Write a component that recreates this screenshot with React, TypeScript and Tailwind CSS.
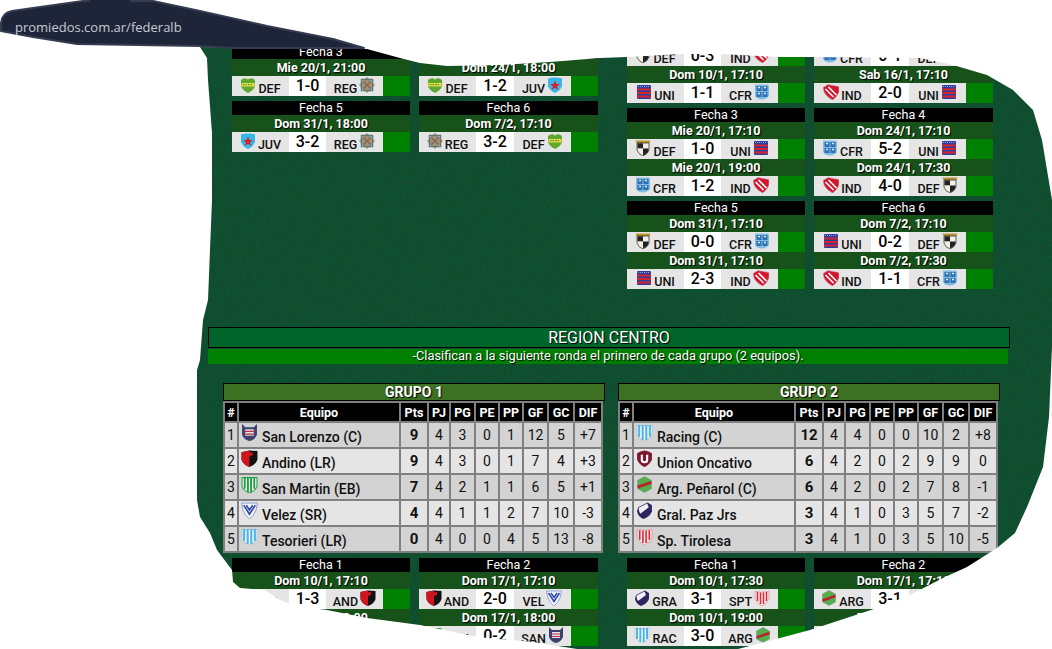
import React from "react";

type IconName = "dfl" | "reg" | "juv" | "dfp" | "ind" | "uni" | "cfr" | "sl" | "and" | "sma" | "vel" | "rac" | "uo" | "arg" | "gra" | "spt";

const shield = "M1 1.5H15V9.5Q14 13.5 8 16Q2 13.5 1 9.5Z";

const TeamIcon = ({ name, className }: { name: IconName; className: string }) => {
  const icons: Record<IconName, React.ReactNode> = {
    dfl: (
      <>
        <path d="M1 3Q4.5 0 8 2.5Q11.5 0 15 3V9Q14 13 8 16Q2 13 1 9Z" fill="#5fa82e" />
        <rect x="1.5" y="6" width="13" height="3.5" fill="#e6dd4a" />
        <path d="M3 7.7H13" stroke="#3d7a22" strokeWidth="1" strokeDasharray="1.5 1" />
      </>
    ),
    reg: (
      <>
        <path d="M8 0L16 8L8 16L0 8Z" fill="#8b9a8e" />
        <rect x="2.5" y="2.5" width="11" height="11" fill="none" stroke="#64786c" strokeWidth="1.5" />
        <path d="M8 3L13 8L8 13L3 8Z" fill="#d98434" />
        <path d="M4 4L12 12M12 4L4 12" stroke="#4f6f9c" strokeWidth="1.3" />
      </>
    ),
    juv: (
      <>
        <path d="M1 1.5Q8 -0.5 15 1.5V9Q13 14 8 16Q3 14 1 9Z" fill="#38b6e8" />
        <path d="M8 3.5L9.3 7H13L10 9.2L11.2 13L8 10.7L4.8 13L6 9.2L3 7H6.7Z" fill="#d81f2a" />
      </>
    ),
    dfp: (
      <>
        <path d="M0.5 0.5H15.5L14.5 3H1.5Z" fill="#b9962c" />
        <path d="M2 3H14V10Q13 14 8 16Q3 14 2 10Z" fill="#f1efe6" stroke="#222" strokeWidth="0.7" />
        <rect x="2.5" y="3.3" width="5.5" height="5" fill="#222" />
        <path d="M8 8.5H13.5V10.5Q12.5 13.5 8 15.5Z" fill="#222" />
      </>
    ),
    ind: (
      <>
        <path d="M0 3.5L5 0.5L16 2.5V8Q14.5 12.5 9.5 16Q3 12.5 1 8Z" fill="#d8142c" stroke="#b9b2b2" strokeWidth="0.6" />
        <path d="M2.5 5L10.5 13M5.5 3L13.5 11" stroke="#fff" strokeWidth="1.6" />
      </>
    ),
    uni: (
      <>
        <rect x="1" y="1" width="14" height="14" rx="1" fill="#2d3f9e" />
        <path d="M1 5.5H15M1 9H15M1 12.5H15" stroke="#d8232f" strokeWidth="2" />
        <path d="M2 2.5H14" stroke="#9aa4d8" strokeWidth="1" strokeDasharray="1 1" />
      </>
    ),
    cfr: (
      <>
        <path d="M1 0.5H14L15 2V12Q12 15.5 8 15.5Q3 15.5 1 12Z" fill="#7fbde3" />
        <rect x="2.5" y="2" width="5" height="5" fill="#2f72b4" />
        <rect x="8.5" y="2" width="5" height="5" fill="#2f72b4" />
        <rect x="2.5" y="8" width="5" height="5" fill="#2f72b4" />
        <rect x="8.5" y="8" width="5" height="5" fill="#2f72b4" />
        <path d="M4 3.5H6M10 3.5H12M4 9.5H6M10 9.5H12" stroke="#e6f2fa" strokeWidth="1.5" />
      </>
    ),
    sl: (
      <>
        <path d="M1 0L4 3H12L15 0V10Q13 15 8 16Q3 15 1 10Z" fill="#3f3f70" />
        <rect x="4" y="5" width="8" height="6" fill="#e8e2e6" />
        <path d="M4 7H12M4 9.5H12" stroke="#c2283f" strokeWidth="1.2" />
      </>
    ),
    and: (
      <>
        <path d="M0.5 2L8 0.5L15.5 1V9Q14 14 8 16Q2 14 0.5 9Z" fill="#111" />
        <path d="M0.5 2L8 0.5V16Q2 14 0.5 9Z" fill="#d0151f" />
        <path d="M7 2.5L11 2V5L8 6Z" fill="#d0151f" />
      </>
    ),
    sma: (
      <>
        <path d={shield} fill="#fff" stroke="#2ba24a" strokeWidth="1" />
        <path d="M3.5 1V12M6.5 1V15M9.5 1V15M12.5 1V12" stroke="#1f9d43" strokeWidth="1.8" />
      </>
    ),
    vel: (
      <>
        <path d="M0.5 1H15.5L14 8Q12 13 8 16Q4 13 2 8Z" fill="#f4f6fb" stroke="#7e8fd0" strokeWidth="0.8" />
        <path d="M2.5 3L8 11.5L13.5 3M5 3L8 7.5L11 3" fill="none" stroke="#2c49a8" strokeWidth="1.5" />
      </>
    ),
    rac: (
      <>
        <path d={shield} fill="#fff" stroke="#8fb4cc" strokeWidth="0.6" />
        <path d="M3 1V12M6.3 1V15M9.7 1V15M13 1V12" stroke="#4db4ea" strokeWidth="2" />
      </>
    ),
    uo: (
      <>
        <path d="M1 3Q4 1 8 0.5Q12 1 15 3V9Q13 14 8 16Q3 14 1 9Z" fill="#7c1a2c" />
        <path d="M5.5 4.5V9.5Q5.5 11.5 8 11.5Q10.5 11.5 10.5 9.5V4.5" fill="none" stroke="#fff" strokeWidth="2" />
      </>
    ),
    arg: (
      <>
        <path d="M8 0.5L14.5 4V12L8 15.5L1.5 12V4Z" fill="#53b04a" stroke="#7f8d7c" strokeWidth="0.5" />
        <path d="M1.5 10.5L14.5 6" stroke="#b8242f" strokeWidth="2.6" />
      </>
    ),
    gra: (
      <>
        <path d="M2 5L11 0.5L15 3V9Q13 14 7 16Q2 14 1 9Z" fill="#2c2560" />
        <path d="M2.5 5.5L10.5 1.5L12 5L4 11Q2.5 9 2.5 5.5Z" fill="#f1f1f5" />
      </>
    ),
    spt: (
      <>
        <path d="M1 1.5Q8 3 15 1.5V9Q13 14 8 16Q3 14 1 9Z" fill="#f8eaea" stroke="#d66" strokeWidth="0.5" />
        <path d="M3.5 2V11M6.5 2.5V14M9.5 2.5V14M12.5 2V11" stroke="#dc2a3c" strokeWidth="1.5" />
      </>
    ),
  };
  return (
    <svg viewBox="0 0 16 16" className={className}>
      {icons[name]}
    </svg>
  );
};

interface Match {
  date: string;
  home: string;
  homeIcon: IconName;
  score: string;
  away: string;
  awayIcon: IconName;
}

interface Fecha {
  title: string;
  matches: Match[];
}

const m = (date: string, home: string, homeIcon: IconName, score: string, away: string, awayIcon: IconName): Match => ({ date, home, homeIcon, score, away, awayIcon });

const shadow = "[text-shadow:1px_1px_1px_#000]";

const FechaCard = ({ title, matches }: Fecha) => (
  <div className="flex flex-col">
    <div className="h-[14px] bg-black text-center text-[12.5px] leading-[14px] text-white">{title}</div>
    {matches.map((x) => (
      <div key={x.date + x.home}>
        <div className={`h-[17px] bg-[#17521a] text-center text-[12.5px] font-bold leading-[17px] text-white ${shadow}`}>{x.date}</div>
        <div className="flex h-[20px]">
          <div className="flex w-[57px] items-start justify-center gap-[2px] bg-[#e5e5e5]">
            <TeamIcon name={x.homeIcon} className="mt-[1px] h-[16px] w-[16px] shrink-0" />
            <span className="mt-[5px] text-[12.5px] font-medium leading-[15px] text-[#111]">{x.home}</span>
          </div>
          <div className="flex-1 bg-white text-center text-[16px] font-medium leading-[19px] text-black">{x.score}</div>
          <div className="flex w-[57px] items-start justify-center gap-[2px] bg-[#e5e5e5]">
            <span className="mt-[5px] text-[12.5px] font-medium leading-[15px] text-[#111]">{x.away}</span>
            <TeamIcon name={x.awayIcon} className="mt-[1px] h-[16px] w-[16px] shrink-0" />
          </div>
          <div className="w-[27px] bg-[#008000]" />
        </div>
      </div>
    ))}
  </div>
);

const FechaGrid = ({ fechas, className }: { fechas: Fecha[]; className?: string }) => (
  <div className={`grid grid-cols-[178px_179px] gap-x-[9px] gap-y-[5px] pl-[9px] ${className ?? ""}`}>
    {fechas.map((f) => (
      <FechaCard key={f.title} {...f} />
    ))}
  </div>
);

type Row = [string, IconName, string, number, number, number, number, number, number, number, string];

const heads = ["#", "Equipo", "Pts", "PJ", "PG", "PE", "PP", "GF", "GC", "DIF"];

const GroupTable = ({ title, rows }: { title: string; rows: Row[] }) => (
  <div>
    <div className={`h-[18px] w-[382px] border border-black bg-[#3c7023] text-center text-[14px] font-bold leading-[17px] text-white ${shadow}`}>{title}</div>
    <table className="w-[380px] table-fixed border-separate border-spacing-[2px] bg-[#808080]">
      <colgroup>
        <col className="w-[12px]" />
        <col className="w-[160px]" />
        <col className="w-[26px]" />
        <col className="w-[20px]" />
        <col className="w-[23px]" />
        <col className="w-[22px]" />
        <col className="w-[22px]" />
        <col className="w-[23px]" />
        <col className="w-[24px]" />
        <col className="w-[26px]" />
      </colgroup>
      <thead>
        <tr className="h-[18px]">
          {heads.map((h) => (
            <th key={h} className={`bg-black p-0 text-center text-[12.5px] font-bold text-white ${shadow}`}>
              <div className="h-[18px] pt-[1px] leading-[18px]">{h}</div>
            </th>
          ))}
        </tr>
      </thead>
      <tbody>
        {rows.map((r, i) => (
          <tr key={r[0]} className={`h-[24px] text-[14px] leading-[24px] text-[#111] ${i % 2 === 0 ? "bg-[#d3d3d3]" : "bg-[#e5e5e5]"}`}>
            <td className="p-0 text-center">{i + 1}</td>
            <td className="p-0">
              <div className="flex h-[24px] items-start gap-[4px] pl-[2px]">
                <TeamIcon name={r[1]} className="mt-[1px] h-[17px] w-[17px] shrink-0" />
                <span className="mt-[2px] whitespace-nowrap font-medium">{r[2]}</span>
              </div>
            </td>
            <td className="p-0 text-center text-[15px] font-bold">{r[3]}</td>
            {r.slice(4).map((v, j) => (
              <td key={j} className="p-0 text-center">{v}</td>
            ))}
          </tr>
        ))}
      </tbody>
    </table>
  </div>
);

const topLeft: Fecha[] = [
  { title: "Fecha 3", matches: [m("Mie 20/1, 21:00", "DEF", "dfl", "1-0", "REG", "reg")] },
  { title: "Fecha 4", matches: [m("Dom 24/1, 18:00", "DEF", "dfl", "1-2", "JUV", "juv")] },
  { title: "Fecha 5", matches: [m("Dom 31/1, 18:00", "JUV", "juv", "3-2", "REG", "reg")] },
  { title: "Fecha 6", matches: [m("Dom 7/2, 17:10", "REG", "reg", "3-2", "DEF", "dfl")] },
];

const topRight: Fecha[] = [
  { title: "Fecha 1", matches: [m("Dom 10/1, 17:00", "DEF", "dfp", "0-3", "IND", "ind"), m("Dom 10/1, 17:10", "UNI", "uni", "1-1", "CFR", "cfr")] },
  { title: "Fecha 2", matches: [m("Sab 16/1, 17:00", "CFR", "cfr", "0-1", "DEF", "dfp"), m("Sab 16/1, 17:10", "IND", "ind", "2-0", "UNI", "uni")] },
  { title: "Fecha 3", matches: [m("Mie 20/1, 17:10", "DEF", "dfp", "1-0", "UNI", "uni"), m("Mie 20/1, 19:00", "CFR", "cfr", "1-2", "IND", "ind")] },
  { title: "Fecha 4", matches: [m("Dom 24/1, 17:10", "CFR", "cfr", "5-2", "UNI", "uni"), m("Dom 24/1, 17:30", "IND", "ind", "4-0", "DEF", "dfp")] },
  { title: "Fecha 5", matches: [m("Dom 31/1, 17:10", "DEF", "dfp", "0-0", "CFR", "cfr"), m("Dom 31/1, 17:10", "UNI", "uni", "2-3", "IND", "ind")] },
  { title: "Fecha 6", matches: [m("Dom 7/2, 17:10", "UNI", "uni", "0-2", "DEF", "dfp"), m("Dom 7/2, 17:30", "IND", "ind", "1-1", "CFR", "cfr")] },
];

const grupo1: Row[] = [
  ["San Lorenzo", "sl", "San Lorenzo (C)", 9, 4, 3, 0, 1, 12, 5, "+7"],
  ["Andino", "and", "Andino (LR)", 9, 4, 3, 0, 1, 7, 4, "+3"],
  ["San Martin", "sma", "San Martin (EB)", 7, 4, 2, 1, 1, 6, 5, "+1"],
  ["Velez", "vel", "Velez (SR)", 4, 4, 1, 1, 2, 7, 10, "-3"],
  ["Tesorieri", "rac", "Tesorieri (LR)", 0, 4, 0, 0, 4, 5, 13, "-8"],
];

const grupo2: Row[] = [
  ["Racing", "rac", "Racing (C)", 12, 4, 4, 0, 0, 10, 2, "+8"],
  ["Union", "uo", "Union Oncativo", 6, 4, 2, 0, 2, 9, 9, "0"],
  ["Penarol", "arg", "Arg. Peñarol (C)", 6, 4, 2, 0, 2, 7, 8, "-1"],
  ["Gral", "gra", "Gral. Paz Jrs", 3, 4, 1, 0, 3, 5, 7, "-2"],
  ["Tirolesa", "spt", "Sp. Tirolesa", 3, 4, 1, 0, 3, 5, 10, "-5"],
];

const bottom1: Fecha[] = [
  { title: "Fecha 1", matches: [m("Dom 10/1, 17:10", "VEL", "vel", "1-3", "AND", "and"), m("Dom 10/1, 18:00", "TES", "rac", "1-0", "SAN", "sl")] },
  { title: "Fecha 2", matches: [m("Dom 17/1, 17:10", "AND", "and", "2-0", "VEL", "vel"), m("Dom 17/1, 18:00", "SAN", "sma", "0-2", "SAN", "sl")] },
];

const bottom2: Fecha[] = [
  { title: "Fecha 1", matches: [m("Dom 10/1, 17:30", "GRA", "gra", "3-1", "SPT", "spt"), m("Dom 10/1, 19:00", "RAC", "rac", "3-0", "ARG", "arg")] },
  { title: "Fecha 2", matches: [m("Dom 17/1, 17:10", "ARG", "arg", "3-1", "GRA", "gra"), m("Dom 17/1, 18:00", "SPT", "spt", "0-1", "RAC", "rac")] },
];

// the torn paper edge and the address bar that sit over the page
const Overlay = () => (
  <>
    <svg viewBox="0 0 1052 649" className="absolute inset-0 h-[649px] w-[1052px]">
      <path
        fill="#fff"
        fillRule="evenodd"
        d="M0 0H1052V649H0Z M200 47L367 49L400 58L420 63L447 66L500 65L550 62L600 58L627 57L683 54L720 54L778 57L820 57L920 58L953 65L987 75L1013 90L1033 110L1042 140L1052 200V347L1049 417L1043 467L1027 507L1015 533L997 548L967 567L943 578L910 595L877 608L810 630L738 649H577L533 642L477 637L420 625L367 618L327 610L296 606L280 600L265 590L240 588L233 582L232 570L217 550L210 533L200 517L197 500L197 370L200 360L203 320L208 300L212 200L212 133L208 80L207 58Z"
      />
      <path
        fill="#1e2538"
        stroke="#363c50"
        strokeWidth="2"
        strokeLinejoin="round"
        d="M1 23Q2 13 12 11L33 8L83 1L153 1L200 11L267 26L333 39L364 48L233 48L200 46L77 44L33 37L1 31Z"
      />
      <rect x="90" y="0" width="40" height="3" fill="#1e2538" />
    </svg>
    <span className="absolute left-[15px] top-[17px] font-['Open_Sans',sans-serif] text-[13px] leading-[20px] text-[#c6cbd4]">promiedos.com.ar/federalb</span>
  </>
);

export default function App() {
  return (
    <div className="relative h-[649px] w-[1052px] overflow-hidden bg-[#134b2c] font-['Roboto',sans-serif]">
      <svg className="absolute inset-0 h-[649px] w-[1052px] opacity-60">
        <filter id="paper">
          <feTurbulence type="fractalNoise" baseFrequency="0.3 0.6" numOctaves="2" seed="4" />
          <feColorMatrix values="0 0 0 0 0  0 0 0 0 0.12  0 0 0 0 0.06  0 0 0 2 -0.75" />
        </filter>
        <rect width="1052" height="649" filter="url(#paper)" />
      </svg>

      <main className="relative flex flex-col pt-[15px]">
        <section className="flex gap-[13px] pl-[223px]">
          <div className="w-[382px]">
            <FechaGrid fechas={topLeft} className="pt-[30px]" />
          </div>
          <div className="w-[382px]">
            <FechaGrid fechas={topRight} />
          </div>
        </section>

        <section className="ml-[208px] mt-[38px]">
          <div className={`h-[21px] w-[802px] border border-black bg-[#00642b] text-center text-[16px] leading-[19px] text-white ${shadow}`}>REGION CENTRO</div>
          <div className={`mt-[1px] h-[15px] w-[800px] bg-[#008000] text-center text-[12.85px] leading-[14px] text-white ${shadow}`}>-Clasifican a la siguiente ronda el primero de cada grupo (2 equipos).</div>
        </section>

        <section className="mt-[19px] flex gap-[13px] pl-[223px]">
          <div className="w-[382px]">
            <GroupTable title="GRUPO 1" rows={grupo1} />
            <FechaGrid fechas={bottom1} className="mt-[5px]" />
          </div>
          <div className="w-[382px]">
            <GroupTable title="GRUPO 2" rows={grupo2} />
            <FechaGrid fechas={bottom2} className="mt-[5px]" />
          </div>
        </section>
      </main>

      <Overlay />
    </div>
  );
}
